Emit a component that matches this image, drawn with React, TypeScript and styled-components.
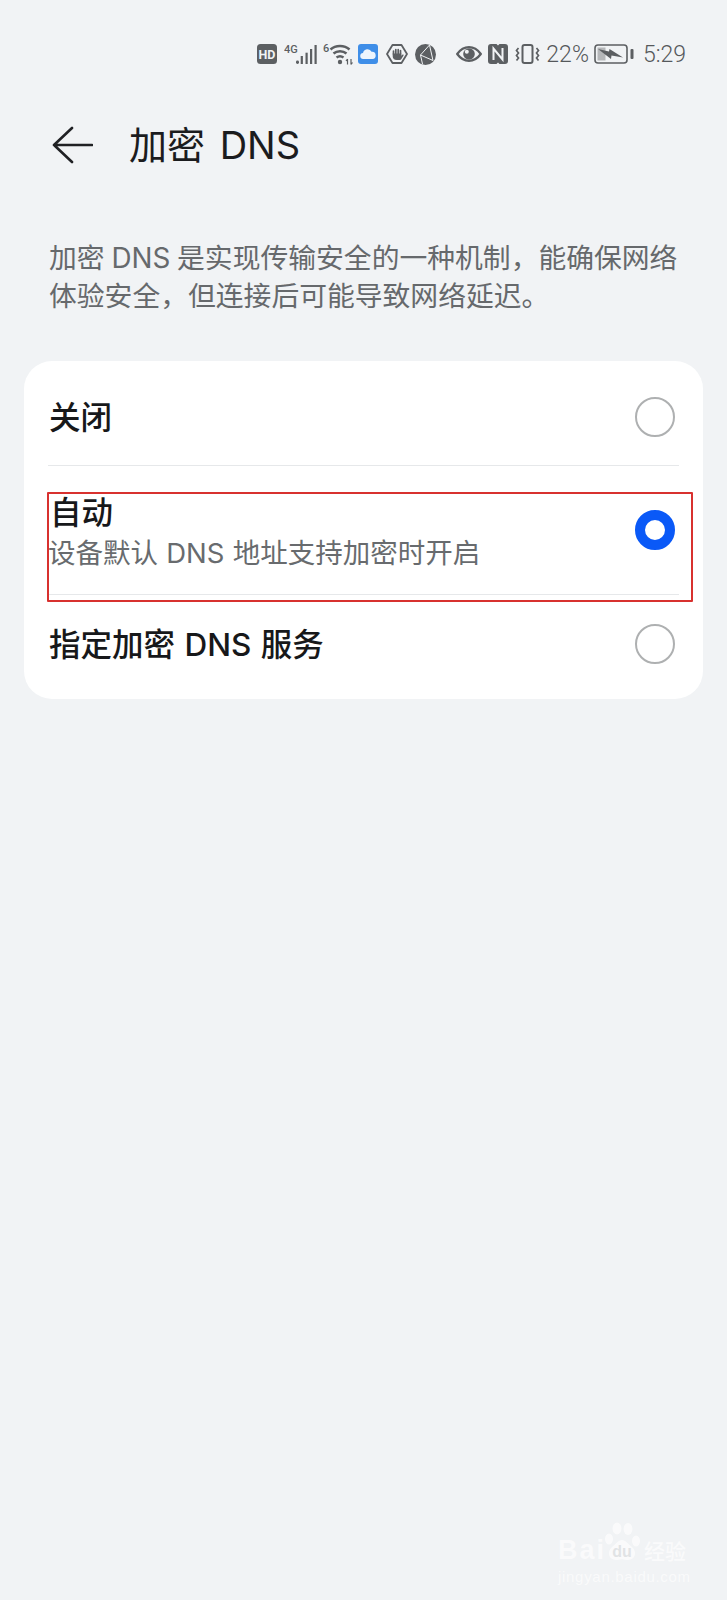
import React from "react";
import styled, { createGlobalStyle } from "styled-components";

const Global = createGlobalStyle`
  html, body { margin: 0; padding: 0; background: #f1f3f5; }
  body { font-family: Inter, "Noto Sans CJK SC", sans-serif; }
`;

const Page = styled.div`
  position: relative;
  width: 727px;
  height: 1600px;
  background: #f1f3f5;
  overflow: hidden;
`;

const StatusBar = styled.div`
  display: flex;
  justify-content: flex-end;
  align-items: center;
  height: 20px;
  padding: 44px 41px 0 0;
  color: #5c5f62;
`;

const StatusIcon = styled.svg<{ $gap?: number }>`
  display: block;
  flex: none;
  margin-left: ${(p) => p.$gap ?? 7}px;
`;

const StatusText = styled.span<{ $gap: number }>`
  margin-left: ${(p) => p.$gap}px;
  padding-top: 2px;
  font-family: Roboto, sans-serif;
  font-size: 23px;
  font-weight: 300;
  line-height: 20px;
  color: #55585b;
`;

const Header = styled.header`
  display: flex;
  align-items: center;
  height: 44px;
  margin-top: 59px;
  padding-left: 52px;
`;

const BackIcon = styled.svg`
  display: block;
  flex: none;
`;

const Title = styled.h1`
  margin: 0 0 0 36px;
  font-size: 38px;
  font-weight: 400;
  line-height: 44px;
  word-spacing: 4px;
  color: #1b1c1e;
`;

const Description = styled.p`
  width: 640px;
  margin: 0;
  padding: 72px 0 0 49px;
  font-size: 27.8px;
  font-weight: 400;
  line-height: 38px;
  word-spacing: -1px;
  color: #66696c;
`;

const Card = styled.section`
  margin: 46px 24px 0;
  padding: 0 24px;
  background: #fff;
  border-radius: 28px;
`;

const Row = styled.div<{ $height: number; $divider?: boolean; $top?: number; $bottom?: number }>`
  display: flex;
  align-items: center;
  justify-content: space-between;
  box-sizing: border-box;
  height: ${(p) => p.$height}px;
  padding: ${(p) => p.$top ?? 0}px 0 ${(p) => p.$bottom ?? 0}px;
  border-bottom: ${(p) => (p.$divider ? "1px solid #e6e8ea" : "none")};
`;

const Label = styled.div`
  padding: 2px 0 0 1px;
  font-size: 31.5px;
  font-weight: 500;
  line-height: 40px;
  word-spacing: 1px;
  color: #17181a;
`;

const Stack = styled.div`
  display: flex;
  flex-direction: column;
  gap: 2px;
  margin-top: 2px;
`;

const Sub = styled.div`
  font-size: 27.5px;
  line-height: 36px;
  word-spacing: 0.5px;
  color: #686b6e;
`;

const StackLabel = styled(Label)`
  padding-left: 2px;
`;

const Radio = styled.span<{ $on?: boolean }>`
  display: block;
  flex: none;
  box-sizing: border-box;
  width: 40px;
  height: 40px;
  margin-right: 4px;
  border-radius: 50%;
  border: ${(p) => (p.$on ? "10px solid #0a59f7" : "2px solid #aeb0b1")};
  background: #fff;
`;

const Highlight = styled.div`
  position: absolute;
  left: 47px;
  top: 492px;
  width: 646px;
  height: 110px;
  box-sizing: border-box;
  border: 2px solid #d8312f;
  border-radius: 1px;
  pointer-events: none;
`;

const Watermark = styled.div`
  position: absolute;
  left: 558px;
  top: 1522px;
  width: 135px;
  color: #fff;
  opacity: 0.65;
`;

const WatermarkBrand = styled.div`
  display: flex;
  align-items: flex-end;
  height: 41px;
  font-family: "Liberation Sans", sans-serif;
  font-size: 27px;
  line-height: 26px;
  font-weight: 700;
  letter-spacing: 2px;
`;

const WatermarkCn = styled.span`
  margin-left: 38px;
  font-family: "Noto Sans CJK SC", sans-serif;
  font-size: 21px;
  font-weight: 500;
  letter-spacing: 0;
`;

const WatermarkUrl = styled.div`
  margin-top: 6px;
  font-family: "Liberation Sans", sans-serif;
  font-size: 15px;
  line-height: 16px;
  letter-spacing: 0.7px;
`;

const Paw = styled.svg`
  position: absolute;
  left: 45px;
  top: 0;
`;

export default function App() {
  return (
    <Page>
      <Global />
      <StatusBar>
        <StatusIcon width="20" height="20" viewBox="0 0 20 20" $gap={0}>
          <rect width="20" height="20" rx="3.5" fill="#5c5f62" />
          <text x="10" y="14.500" textAnchor="middle" fontFamily="Roboto, sans-serif" fontSize="12.500" fontWeight="700" fill="#f1f3f5">HD</text>
        </StatusIcon>
        <StatusIcon width="34" height="22" viewBox="0 0 34 22" $gap={7} fill="#5c5f62">
          <text x="0" y="10" fontFamily="Roboto, sans-serif" fontSize="11" fontWeight="500">4G</text>
          <rect x="12" y="17.500" width="3" height="3.500" rx="1.400" />
          <rect x="16.700" y="13" width="2.200" height="8" />
          <rect x="21.500" y="9.700" width="2.200" height="11.300" />
          <rect x="26" y="6" width="2.200" height="15" />
          <rect x="30.500" y="2" width="2.200" height="19" />
        </StatusIcon>
        <StatusIcon width="30" height="22" viewBox="0 0 30 22" $gap={5} fill="none" stroke="#5c5f62">
          <text x="0" y="9" fontFamily="Roboto, sans-serif" fontSize="11" fontWeight="500" fill="#5c5f62" stroke="none">6</text>
          <path d="M7.500 6.500c5-4.700 14-4.700 19 0" strokeWidth="2.500" />
          <path d="M10.500 10.500c3.500-3 9.500-3 13 0" strokeWidth="2.500" />
          <path d="M13.500 14.500c2-1.500 5-1.500 7 0" strokeWidth="2.500" />
          <circle cx="17" cy="19" r="2.200" fill="#5c5f62" stroke="none" />
          <path d="M24.500 16v5.500M24.500 16l-1.500 2M28 21.500V16M28 21.500l1.500-2" strokeWidth="1.200" />
        </StatusIcon>
        <StatusIcon width="20" height="20" viewBox="0 0 20 20" $gap={5}>
          <rect width="20" height="20" rx="3" fill="#3f8ee8" />
          <path d="M5.500 15a3 3 0 0 1-.500-6 4.600 4.600 0 0 1 8.600-1.200A3.600 3.600 0 0 1 14.500 15z" fill="#eef5fd" />
        </StatusIcon>
        <StatusIcon width="22" height="20" viewBox="0 0 22 20" $gap={8}>
          <path d="M6.500 1h9l5.500 9-5.500 9h-9L1 10z" fill="none" stroke="#5c5f62" strokeWidth="1.800" strokeLinejoin="round" />
          <path d="M7.500 10V7M9.800 10V5.500M12.200 10V5.500M14.500 10V6.500" stroke="#5c5f62" strokeWidth="1.700" strokeLinecap="round" fill="none" />
          <path d="M6.700 9.500h8.600v2.300l1.300-1.200c.7-.500 1.300.2.900.900l-1.800 3c-.600 1-1.400 1.500-2.600 1.500h-2.400c-2.500 0-4-1.500-4-3.800z" fill="#5c5f62" />
        </StatusIcon>
        <StatusIcon width="21" height="21" viewBox="0 0 21 21" $gap={7}>
          <circle cx="10.500" cy="10.500" r="10.500" fill="#5c5f62" />
          <path d="M14.500 1 5.500 11l12.500 5.500M5.500 11l2 9M14.500 1 18 16.500" stroke="#f1f3f5" strokeWidth="1" fill="none" />
        </StatusIcon>
        <StatusIcon width="26" height="16" viewBox="0 0 26 16" $gap={20}>
          <path d="M1.200 8C4.500 3.500 8.500 1.200 13 1.200S21.500 3.500 24.800 8C21.500 12.500 17.500 14.800 13 14.800S4.500 12.500 1.200 8z" fill="none" stroke="#5c5f62" strokeWidth="2.300" strokeLinejoin="round" />
          <circle cx="13" cy="8" r="5.800" fill="#5c5f62" />
          <circle cx="10.800" cy="5.800" r="2" fill="#f1f3f5" />
        </StatusIcon>
        <StatusIcon width="20" height="20" viewBox="0 0 20 20" $gap={6}>
          <path d="M3 0h5.500l1.500 1.500L11.500 0H17a3 3 0 0 1 3 3v14a3 3 0 0 1-3 3h-5.500L10 18.500 8.500 20H3a3 3 0 0 1-3-3V3a3 3 0 0 1 3-3z" fill="#5c5f62" />
          <path d="M5.500 16V4.500l9 11V4" stroke="#f1f3f5" strokeWidth="2" fill="none" />
        </StatusIcon>
        <StatusIcon width="25" height="20" viewBox="0 0 25 20" $gap={7} fill="none" stroke="#5c5f62">
          <rect x="7.500" y="1" width="10" height="18" rx="2" strokeWidth="2" />
          <path d="M3.500 4 1.500 6.500l2 2.500-2 2.500 2 2.500-2 2.500M21.500 4l2 2.500-2 2.500 2 2.500-2 2.500 2 2.500" strokeWidth="1.700" />
        </StatusIcon>
        <StatusText $gap={6}>22%</StatusText>
        <StatusIcon width="40" height="20" viewBox="0 0 40 20" $gap={5}>
          <rect x="1" y="1" width="32" height="18" rx="3" fill="none" stroke="#5c5f62" strokeWidth="1.600" />
          <rect x="3.500" y="3.500" width="8" height="13" fill="#b5b7b9" />
          <path d="M4 5 15 7.500l.500-2.500L29 13.500 17.500 11.500 17 15z" fill="#5c5f62" />
          <rect x="36.500" y="5" width="3" height="10" rx="1" fill="#5c5f62" />
        </StatusIcon>
        <StatusText $gap={9}>5:29</StatusText>
      </StatusBar>

      <Header>
        <BackIcon width="41" height="38" viewBox="0 0 41 38" fill="none" stroke="#202124" strokeWidth="2.600" strokeLinecap="round" strokeLinejoin="round">
          <path d="M20 2 2 19l18 17M2 19h38" />
        </BackIcon>
        <Title>加密 DNS</Title>
      </Header>

      <Description>加密 DNS 是实现传输安全的一种机制，能确保网络体验安全，但连接后可能导致网络延迟。</Description>

      <Card>
        <Row $height={105} $divider $top={7}>
          <Label>关闭</Label>
          <Radio />
        </Row>
        <Row $height={129} $divider>
          <Stack>
            <StackLabel>自动</StackLabel>
            <Sub>设备默认 DNS 地址支持加密时开启</Sub>
          </Stack>
          <Radio $on />
        </Row>
        <Row $height={104} $bottom={6}>
          <Label>指定加密 DNS 服务</Label>
          <Radio />
        </Row>
      </Card>

      <Highlight />

      <Watermark>
        <Paw width="38" height="44" viewBox="0 0 38 44" fill="#fff">
          <ellipse cx="6" cy="17" rx="4" ry="5.500" />
          <ellipse cx="14" cy="6.500" rx="4.500" ry="6" />
          <ellipse cx="25" cy="7" rx="4.500" ry="6" />
          <ellipse cx="33" cy="19" rx="4" ry="5.500" />
          <path d="M19 18c-4 0-6 4-10 7-5 4-4 13 4 13 2 0 4-.800 6-.800s4 .800 6 .800c8 0 9-9 4-13-4-3-6-7-10-7z" />
          <text x="19" y="35" textAnchor="middle" fontFamily="'Liberation Sans', sans-serif" fontSize="16" fontWeight="700" fill="#d9dbdd">du</text>
        </Paw>
        <WatermarkBrand>
          Bai<WatermarkCn>经验</WatermarkCn>
        </WatermarkBrand>
        <WatermarkUrl>jingyan.baidu.com</WatermarkUrl>
      </Watermark>
    </Page>
  );
}
